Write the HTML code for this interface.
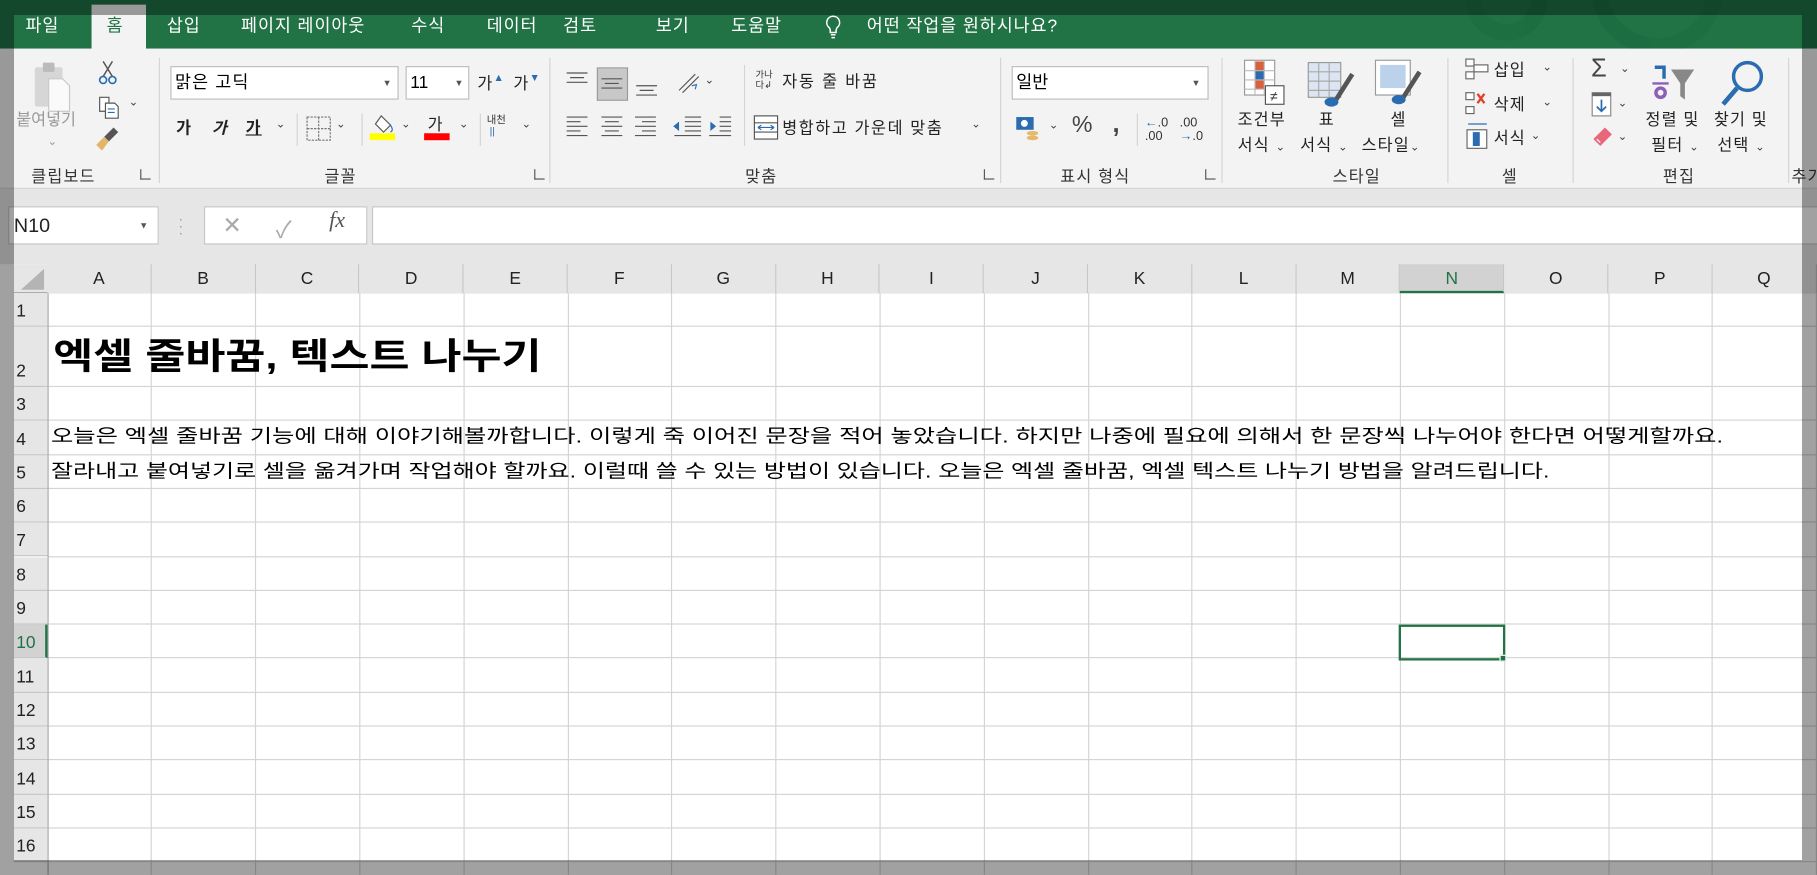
<!DOCTYPE html>
<html><head><meta charset="utf-8"><style>
*{margin:0;padding:0;box-sizing:border-box}
html,body{width:1817px;height:875px;overflow:hidden;background:#fff}
body{font-family:"Liberation Sans","Noto Sans CJK KR",sans-serif;position:relative}
#c{position:absolute;left:0;top:0;width:1568px;height:755px;transform:scale(1.15880);transform-origin:0 0;overflow:hidden;background:#fff}
.a{position:absolute;white-space:nowrap}
.tab{position:absolute;top:13px;color:#fff;font-size:15px;line-height:20px;letter-spacing:.8px}
.rb{font-size:14px;color:#222;letter-spacing:1px}
.lbl{font-size:14px;color:#333;top:142px;letter-spacing:1px}
.sep{position:absolute;top:50px;width:1px;height:108px;background:#d4d4d4}
.chev{font-size:10px;color:#444;letter-spacing:0}
.col{position:absolute;top:228px;height:25px;line-height:25px;text-align:center;font-size:15px;color:#222;border-right:1px solid #c6c6c6;background:#e6e6e6}
.row{position:absolute;left:12px;width:29px;font-size:15px;color:#222;background:#e6e6e6;border-bottom:1px solid #c6c6c6;padding-left:2px}
.hl{position:absolute;left:41px;right:0;height:1px;background:#d4d4d4}
.vl{position:absolute;top:253px;bottom:0;width:1px;background:#d4d4d4}
.ov{position:absolute;background:rgba(0,0,0,0.37)}
.launch{position:absolute;top:146px;width:9px;height:9px;border-left:1px solid #555;border-bottom:1px solid #555}
.tx{transform-origin:0 0}
</style></head><body>
<div id="c">
<div class="a" style="left:0;top:0;width:1568px;height:42px;background:#217346"></div>
<svg class="a" style="left:1000px;top:0" width="560" height="42"><g fill="none" stroke="#1a6a3e" stroke-width="14" opacity=".6"><circle cx="430" cy="-10" r="50"/><circle cx="300" cy="0" r="28"/></g></svg>
<div class="a" style="left:79px;top:4px;width:47px;height:40px;background:#f3f3f3"></div>
<div class="tab" style="left:22px">파일</div>
<div class="tab" style="left:92px;color:#217346">홈</div>
<div class="tab" style="left:144px">삽입</div>
<div class="tab" style="left:208px">페이지 레이아웃</div>
<div class="tab" style="left:355px">수식</div>
<div class="tab" style="left:420px">데이터</div>
<div class="tab" style="left:486px">검토</div>
<div class="tab" style="left:566px">보기</div>
<div class="tab" style="left:631px">도움말</div>
<svg class="a" style="left:712px;top:13px" width="14" height="22"><path d="M7 1a5.5 5.5 0 0 0-3.5 9.8c.8.8 1 1.6 1 3V15h5v-1.2c0-1.4.2-2.2 1-3A5.5 5.5 0 0 0 7 1zM5 17h4M5.5 19.5h3" fill="none" stroke="#fff" stroke-width="1.3"/></svg>
<div class="tab" style="left:748px">어떤 작업을 원하시나요?</div>

<div class="a" style="left:0;top:42px;width:1568px;height:121px;background:#f3f3f3;border-bottom:1px solid #d2d2d2"></div>
<svg class="a" style="left:28px;top:52px" width="36" height="50"><rect x="2" y="6" width="24" height="34" rx="2" fill="#d6d6d6"/><rect x="9" y="2" width="10" height="8" rx="1" fill="#bbb"/><path d="M14 16h12l6 6v22H14z" fill="#fafafa" stroke="#c8c8c8"/></svg>
<div class="a rb" style="left:14px;top:93px;color:#999;letter-spacing:0">붙여넣기</div>
<div class="a chev" style="left:41px;top:117px;color:#999">⌄</div>
<svg class="a" style="left:84px;top:52px" width="18" height="22"><path d="M5 1l8 13M13 1L5 14" stroke="#555" stroke-width="1.3"/><circle cx="5" cy="17" r="3" fill="none" stroke="#2b6cb0" stroke-width="1.4"/><circle cx="13" cy="17" r="3" fill="none" stroke="#2b6cb0" stroke-width="1.4"/></svg>
<svg class="a" style="left:84px;top:82px" width="20" height="22"><path d="M2 2h8v12H2z" fill="#fff" stroke="#555"/><path d="M7 7h8l3 3v10H7z" fill="#fff" stroke="#555"/><path d="M9 12h6M9 15h6" stroke="#2b6cb0"/></svg>
<div class="a chev" style="left:111px;top:83px">⌄</div>
<svg class="a" style="left:82px;top:108px" width="22" height="24"><path d="M16 2l4 4-8 8-4-4z" fill="#555"/><path d="M8 10l4 4-6 8-5-5z" fill="#e3b56b"/></svg>
<div class="a lbl" style="left:27px">클립보드</div>
<div class="launch" style="left:121px"></div>
<div class="sep" style="left:137px"></div>
<div class="a" style="left:147px;top:57px;width:197px;height:29px;background:#fff;border:1px solid #bdbdbd;font-size:15px;line-height:27px;padding-left:3px;letter-spacing:1px">맑은 고딕<span style="position:absolute;right:4px;font-size:8px;color:#555">▼</span></div>
<div class="a" style="left:350px;top:57px;width:55px;height:29px;background:#fff;border:1px solid #bdbdbd;font-size:15px;line-height:27px;padding-left:3px">11<span style="position:absolute;right:4px;font-size:8px;color:#555">▼</span></div>
<div class="a rb" style="left:412px;top:62px">가<span style="color:#2b6cb0;font-size:9px;vertical-align:top">▲</span></div>
<div class="a rb" style="left:443px;top:62px">가<span style="color:#2b6cb0;font-size:9px;vertical-align:top">▼</span></div>
<div class="a rb" style="left:152px;top:100px;font-weight:bold">가</div>
<div class="a rb" style="left:183px;top:100px;font-style:italic;font-weight:bold">가</div>
<div class="a rb" style="left:212px;top:100px;text-decoration:underline;font-weight:bold">가</div>
<div class="a chev" style="left:238px;top:102px">⌄</div>
<div class="a" style="left:256px;top:98px;width:1px;height:28px;background:#d4d4d4"></div>
<svg class="a" style="left:264px;top:100px" width="22" height="22"><rect x="1" y="1" width="20" height="20" fill="none" stroke="#777" stroke-dasharray="2 1"/><path d="M11 1v20M1 11h20" stroke="#777" stroke-dasharray="2 1"/></svg>
<div class="a chev" style="left:290px;top:102px">⌄</div>
<div class="a" style="left:312px;top:98px;width:1px;height:28px;background:#d4d4d4"></div>
<svg class="a" style="left:319px;top:97px" width="24" height="24"><path d="M10 3l8 8-6 6-7-7z" fill="#fff" stroke="#555"/><path d="M18 11c2 3 2 5 0 6" stroke="#2b6cb0" fill="none"/><rect x="0" y="18" width="22" height="6" fill="#ffff00"/></svg>
<div class="a chev" style="left:346px;top:102px">⌄</div>
<div class="a rb" style="left:369px;top:97px">가</div>
<div class="a" style="left:366px;top:115px;width:22px;height:6px;background:#ff0000"></div>
<div class="a chev" style="left:396px;top:102px">⌄</div>
<div class="a" style="left:414px;top:98px;width:1px;height:28px;background:#d4d4d4"></div>
<div class="a" style="left:420px;top:98px;font-size:9px;line-height:10px;color:#333">내천<br><span style="color:#2b6cb0">&nbsp;||</span></div>
<div class="a chev" style="left:450px;top:102px">⌄</div>
<div class="a lbl" style="left:280px">글꼴</div>
<div class="launch" style="left:461px"></div>
<div class="sep" style="left:474px"></div>
<svg class="a" style="left:486px;top:58px" width="90" height="30"><g stroke="#555"><path d="M3 5h18M6 9h12M3 13h18"/><rect x="29.5" y="0.5" width="26" height="28" fill="#c8c8c8" stroke="#999"/><path d="M33 10h18M36 14h12M33 18h18"/><path d="M63 16h18M66 20h12M63 24h18"/></g></svg>
<svg class="a" style="left:583px;top:60px" width="22" height="22"><path d="M3 18L17 4M6 20L20 6" stroke="#555"/><path d="M14 14l4-1-1 4" stroke="#2b6cb0" fill="none"/></svg>
<div class="a chev" style="left:608px;top:64px">⌄</div>
<div class="a" style="left:642px;top:56px;width:1px;height:70px;background:#d4d4d4"></div>
<div class="a" style="left:652px;top:60px;font-size:8px;line-height:9px;color:#333">가나<br>다↲</div>
<div class="a rb" style="left:675px;top:60px;letter-spacing:1.6px">자동 줄 바꿈</div>
<svg class="a" style="left:486px;top:98px" width="145" height="24"><g stroke="#555"><path d="M3 3h18M3 7h12M3 11h18M3 15h12M3 19h18"/><path d="M33 3h18M36 7h12M33 11h18M36 15h12M33 19h18"/><path d="M62 3h18M68 7h12M62 11h18M68 15h12M62 19h18"/><path d="M105 3h14M105 7h14M105 11h14M105 15h14M96 19h23"/><path d="M135 3h10M135 7h10M135 11h10M135 15h10M126 19h19"/></g><path d="M95 11l5-4v8z" fill="#2b6cb0"/><path d="M132 11l-5-4v8z" fill="#2b6cb0"/></svg>
<svg class="a" style="left:650px;top:98px" width="22" height="24"><rect x="1" y="2" width="20" height="20" fill="#fff" stroke="#555"/><path d="M1 8h20M1 16h20" stroke="#555"/><path d="M4 12h14M4 12l3-2M4 12l3 2M18 12l-3-2M18 12l-3 2" stroke="#2b6cb0"/></svg>
<div class="a rb" style="left:675px;top:100px;letter-spacing:1.4px">병합하고 가운데 맞춤</div>
<div class="a chev" style="left:838px;top:102px">⌄</div>
<div class="a lbl" style="left:643px">맞춤</div>
<div class="launch" style="left:849px"></div>
<div class="sep" style="left:863px"></div>
<div class="a" style="left:873px;top:57px;width:170px;height:29px;background:#fff;border:1px solid #bdbdbd;font-size:15px;line-height:27px;padding-left:3px">일반<span style="position:absolute;right:6px;font-size:8px;color:#555">▼</span></div>
<svg class="a" style="left:876px;top:100px" width="22" height="24"><rect x="1" y="1" width="15" height="11" fill="#2b6cb0"/><circle cx="8" cy="6.5" r="3" fill="#fff"/><ellipse cx="15" cy="15" rx="5" ry="2" fill="#e6b86a"/><ellipse cx="15" cy="19" rx="5" ry="2" fill="#e6b86a"/></svg>
<div class="a chev" style="left:905px;top:103px">⌄</div>
<div class="a" style="left:925px;top:97px;font-size:20px;color:#444">%</div>
<div class="a" style="left:960px;top:94px;font-size:22px;font-weight:bold;color:#444">,</div>
<div class="a" style="left:981px;top:98px;width:1px;height:28px;background:#d4d4d4"></div>
<div class="a" style="left:988px;top:100px;font-size:11px;line-height:12px;color:#333"><span style="color:#2b6cb0">←</span>.0<br>.00</div>
<div class="a" style="left:1018px;top:100px;font-size:11px;line-height:12px;color:#333">.00<br><span style="color:#2b6cb0">→</span>.0</div>
<div class="a lbl" style="left:915px">표시 형식</div>
<div class="launch" style="left:1040px"></div>
<div class="sep" style="left:1054px"></div>
<svg class="a" style="left:1072px;top:50px" width="42" height="42"><rect x="2" y="2" width="26" height="30" fill="#fff" stroke="#999"/><rect x="11" y="3" width="8" height="8" fill="#d9603b"/><rect x="11" y="11" width="8" height="8" fill="#2b6cb0"/><rect x="11" y="19" width="8" height="8" fill="#d9603b"/><path d="M2 11h26M2 19h26M2 27h26M11 2v30M19 2v30" stroke="#bbb"/><rect x="20" y="24" width="16" height="16" fill="#fff" stroke="#555"/><text x="24" y="37" font-size="12" fill="#333">≠</text></svg>
<svg class="a" style="left:1127px;top:52px" width="44" height="42"><rect x="2" y="2" width="28" height="30" fill="#dbe6f2" stroke="#999"/><path d="M2 10h28M2 18h28M2 26h28M11 2v30M20 2v30" stroke="#aaa"/><path d="M40 12L26 34" stroke="#555" stroke-width="4"/><ellipse cx="22" cy="36" rx="6" ry="4" fill="#2b6cb0"/></svg>
<svg class="a" style="left:1185px;top:50px" width="44" height="44"><rect x="2" y="2" width="30" height="30" fill="#fff" stroke="#999"/><rect x="6" y="6" width="22" height="20" fill="#bcd2ea"/><path d="M40 12L26 34" stroke="#555" stroke-width="4"/><ellipse cx="22" cy="36" rx="6" ry="4" fill="#2b6cb0"/></svg>
<div class="a rb" style="left:1068px;top:93px">조건부</div>
<div class="a rb" style="left:1138px;top:93px">표</div>
<div class="a rb" style="left:1200px;top:93px">셀</div>
<div class="a rb" style="left:1068px;top:115px">서식 <span class="chev">⌄</span></div>
<div class="a rb" style="left:1122px;top:115px">서식 <span class="chev">⌄</span></div>
<div class="a rb" style="left:1175px;top:115px">스타일<span class="chev">⌄</span></div>
<div class="a lbl" style="left:1150px">스타일</div>
<div class="sep" style="left:1249px"></div>
<svg class="a" style="left:1264px;top:50px" width="22" height="80"><g fill="#fff" stroke="#666"><rect x="1" y="1" width="7" height="6"/><rect x="1" y="12" width="7" height="6"/><rect x="8" y="6" width="12" height="6"/><rect x="1" y="30" width="7" height="6"/><rect x="1" y="42" width="7" height="6"/><rect x="2" y="62" width="17" height="16"/></g><path d="M11 31l6 8M17 31l-6 8" stroke="#e0402a" stroke-width="2"/><path d="M3 57h16" stroke="#2b6cb0"/><rect x="7" y="64" width="6" height="12" fill="#2b6cb0"/></svg>
<div class="a rb" style="left:1289px;top:50px">삽입</div>
<div class="a rb" style="left:1289px;top:80px">삭제</div>
<div class="a rb" style="left:1289px;top:109px">서식</div>
<div class="a chev" style="left:1331px;top:53px">⌄</div>
<div class="a chev" style="left:1331px;top:83px">⌄</div>
<div class="a chev" style="left:1321px;top:112px">⌄</div>
<div class="a lbl" style="left:1296px">셀</div>
<div class="sep" style="left:1357px"></div>
<div class="a" style="left:1373px;top:46px;font-size:22px;color:#444">Σ</div>
<div class="a chev" style="left:1398px;top:54px">⌄</div>
<svg class="a" style="left:1373px;top:79px" width="20" height="22"><rect x="1" y="1" width="16" height="20" fill="#fff" stroke="#888"/><rect x="1" y="1" width="16" height="3" fill="#666"/><path d="M9 7v10M5 13l4 4 4-4" stroke="#2b6cb0" stroke-width="1.5" fill="none"/></svg>
<div class="a chev" style="left:1396px;top:84px">⌄</div>
<svg class="a" style="left:1373px;top:108px" width="20" height="22"><path d="M12 2l6 6-10 10-6-6z" fill="#e8677d"/><path d="M5 12l3 3" stroke="#fff"/></svg>
<div class="a chev" style="left:1396px;top:113px">⌄</div>
<svg class="a" style="left:1424px;top:52px" width="42" height="38"><path d="M4 6h8v10" stroke="#2b6cb0" stroke-width="3" fill="none"/><path d="M2 20h14" stroke="#8c5fb8" stroke-width="2"/><circle cx="9" cy="28" r="4" fill="none" stroke="#8c5fb8" stroke-width="3"/><path d="M18 8h20l-8 12v14l-4-3V20z" fill="#888"/></svg>
<svg class="a" style="left:1482px;top:50px" width="42" height="42"><circle cx="26" cy="16" r="12" fill="none" stroke="#2b6cb0" stroke-width="3"/><path d="M17 26L5 40" stroke="#2b6cb0" stroke-width="4"/></svg>
<div class="a rb" style="left:1420px;top:93px">정렬 및</div>
<div class="a rb" style="left:1479px;top:93px">찾기 및</div>
<div class="a rb" style="left:1425px;top:115px">필터 <span class="chev">⌄</span></div>
<div class="a rb" style="left:1482px;top:115px">선택 <span class="chev">⌄</span></div>
<div class="a lbl" style="left:1435px">편집</div>
<div class="sep" style="left:1543px"></div>
<div class="a lbl" style="left:1546px">추가</div>

<div class="a" style="left:0;top:163px;width:1568px;height:65px;background:#e6e6e6"></div>
<div class="a" style="left:7px;top:178px;width:130px;height:33px;background:#fff;border:1px solid #c6c6c6;font-size:17px;line-height:31px;padding-left:4px;color:#222">N10<span style="position:absolute;right:8px;font-size:8px;color:#555">▼</span></div>
<div class="a" style="left:154px;top:186px;font-size:12px;color:#999;line-height:6px">·<br>·<br>·</div>
<div class="a" style="left:176px;top:178px;width:141px;height:33px;background:#fff;border:1px solid #c6c6c6"></div>
<div class="a" style="left:192px;top:182px;font-size:20px;color:#aaa">✕</div>
<div class="a" style="left:238px;top:182px;font-size:20px;color:#aaa">✓</div>
<div class="a" style="left:284px;top:180px;font-size:19px;color:#555;font-style:italic;font-family:'Liberation Serif',serif">fx</div>
<div class="a" style="left:321px;top:178px;width:1300px;height:33px;background:#fff;border:1px solid #c6c6c6"></div>

<div class="a" style="left:12px;top:228px;width:1556px;height:25px;background:#e6e6e6;border-bottom:1px solid #ababab"></div>
<svg class="a" style="left:14px;top:230px" width="26" height="22"><path d="M24 2v18H4z" fill="#b4b4b4"/></svg>
<div class="a tx" style="left:46px;top:284px;font-size:31px;font-weight:bold;color:#000;line-height:48px;transform:scaleX(1.21)">엑셀 줄바꿈, 텍스트 나누기</div>
<div class="a tx" style="left:44px;top:366px;font-size:16px;color:#000;line-height:24px;transform:scaleX(1.308)">오늘은 엑셀 줄바꿈 기능에 대해 이야기해볼까합니다. 이렇게 죽 이어진 문장을 적어 놓았습니다. 하지만 나중에 필요에 의해서 한 문장씩 나누어야 한다면 어떻게할까요.</div>
<div class="a tx" style="left:44px;top:396px;font-size:16px;color:#000;line-height:24px;transform:scaleX(1.293)">잘라내고 붙여넣기로 셀을 옮겨가며 작업해야 할까요. 이럴때 쓸 수 있는 방법이 있습니다. 오늘은 엑셀 줄바꿈, 엑셀 텍스트 나누기 방법을 알려드립니다.</div>
</div>
<div class="ov" style="left:0;top:0;width:1817px;height:15px"></div>
<div class="ov" style="left:0;top:15px;width:14px;height:845px"></div>
<div class="ov" style="left:1802px;top:15px;width:15px;height:845px"></div>
<div class="ov" style="left:0;top:860px;width:1817px;height:15px"></div>
<script>
var c=document.getElementById('c'),h='';
var L="ABCDEFGHIJKLMNOPQ";
for(var i=0;i<17;i++){var x=41+i*89.8;
h+='<div class="col" style="left:'+x+'px;width:89.8px;'+(i==13?'background:#d2d2d2;color:#217346;border-bottom:2px solid #217346;':'')+'">'+L[i]+'</div>';
h+='<div class="vl" style="left:'+(x+89.3)+'px"></div>';}
var tops=[253,282,334];for(var r=3;r<17;r++)tops.push(334+(r-2)*29.3);
for(var r=0;r<16;r++){var t=tops[r],b=tops[r+1]||770;
h+='<div class="hl" style="top:'+(b-1)+'px"></div>';
h+='<div class="row" style="top:'+t+'px;height:'+(b-t)+'px;padding-top:'+(b-t-22)+'px;'+(r==9?'background:#d2d2d2;color:#217346;border-right:2px solid #217346;':'')+'">'+(r+1)+'</div>';}
h+='<div class="a" style="left:41px;top:253px;width:1px;height:520px;background:#ababab"></div>';
h+='<div class="a" style="left:1207px;top:539px;width:92px;height:31px;border:2px solid #217346"></div><div class="a" style="left:1294px;top:565px;width:6px;height:6px;background:#217346;border:1px solid #fff"></div>';
var tx=document.querySelectorAll('#c > .tx');
c.insertAdjacentHTML('beforeend',h);
for(var k=0;k<tx.length;k++)c.appendChild(tx[k]);
</script>
</body></html>
